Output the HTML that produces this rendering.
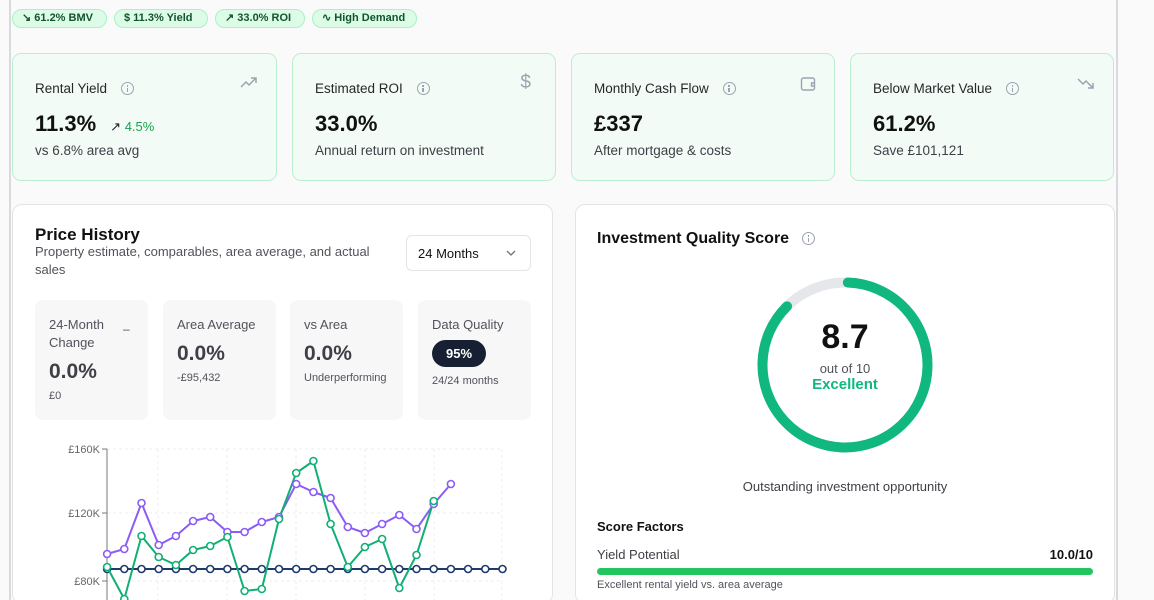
<!DOCTYPE html>
<html><head><meta charset="utf-8"><style>
*{box-sizing:border-box;margin:0;padding:0}
html{overflow:hidden;height:600px}
body{width:1154px;height:600px;overflow:hidden;background:#fafafa;font-family:"Liberation Sans",sans-serif;color:#18181b;position:relative}
.vl{position:absolute;top:0;width:2px;height:600px;background:#d9d9de}
.badge{position:absolute;top:9px;height:19px;border:1px solid #a7f3c5;background:#dcfce7;border-radius:10px;color:#14532d;font-size:11px;font-weight:bold;line-height:17px;padding:0 9px;white-space:nowrap}
.card{position:absolute;top:53px;height:128px;border:1px solid #bbf0cf;border-radius:9px;background:#f3fbf6}
.card .t{position:absolute;left:22px;top:27px;font-size:13.5px;color:#27272a}
.card .v{position:absolute;left:22px;top:57px;font-size:22px;font-weight:bold;color:#111}
.card .s{position:absolute;left:22px;top:89px;font-size:13.5px;color:#3f3f46}
.info{display:inline-block;width:13px;height:13px;border:1.3px solid #9ca3af;border-radius:50%;vertical-align:-2px;margin-left:14px;position:relative}
.info:after{content:"";position:absolute;left:4.5px;top:4.5px;width:1.5px;height:4px;background:#9ca3af}
.info:before{content:"";position:absolute;left:4.5px;top:2px;width:1.5px;height:1.5px;background:#9ca3af}
.ic{position:absolute;right:18px;top:22px}
.panel{position:absolute;top:204px;height:400px;border:1px solid #e4e4e7;border-radius:10px;background:#fff}
.st{position:absolute;top:95px;width:113px;height:120px;background:#f7f7f8;border-radius:8px}
.st .a{position:absolute;left:14px;top:16px;font-size:13px;color:#52525b;line-height:18px}
.st .b{position:absolute;left:14px;font-size:21px;font-weight:bold;color:#3f3f46}
.st .c{position:absolute;left:14px;font-size:11px;color:#52525b}
</style></head><body>
<div class="vl" style="left:9px"></div>
<div class="vl" style="left:1116px"></div>

<div class="badge" style="left:12px;width:95px">↘ 61.2% BMV</div>
<div class="badge" style="left:114px;width:94px">$ 11.3% Yield</div>
<div class="badge" style="left:215px;width:90px">↗ 33.0% ROI</div>
<div class="badge" style="left:312px;width:105px">∿ High Demand</div>

<div class="card" style="left:12px;width:265px">
<div class="t">Rental Yield<span class="info"></span></div>
<svg class="ic" width="18" height="14" viewBox="0 0 18 14" fill="none" stroke="#9ca3af" stroke-width="1.5"><path d="M1 11l5-5 3 3 7-7M11 2h5v5"/></svg>
<div class="v">11.3%<span style="font-size:13px;color:#16a34a;font-weight:normal;margin-left:14px"><span style="color:#222">↗</span> 4.5%</span></div>
<div class="s">vs 6.8% area avg</div></div>
<div class="card" style="left:292px;width:264px">
<div class="t">Estimated ROI<span class="info"></span></div>
<div class="ic" style="font-size:19px;color:#9ca3af;top:18px;right:24px">$</div>
<div class="v">33.0%</div>
<div class="s">Annual return on investment</div></div>
<div class="card" style="left:571px;width:264px">
<div class="t">Monthly Cash Flow<span class="info"></span></div>
<svg class="ic" width="16" height="16" viewBox="0 0 16 16" fill="none" stroke="#9ca3af" stroke-width="1.4"><rect x="1.5" y="2" width="13" height="12" rx="2"/><path d="M14.5 7h-3v3h3"/></svg>
<div class="v">£337</div>
<div class="s">After mortgage &amp; costs</div></div>
<div class="card" style="left:850px;width:264px">
<div class="t">Below Market Value<span class="info"></span></div>
<svg class="ic" width="18" height="14" viewBox="0 0 18 14" fill="none" stroke="#9ca3af" stroke-width="1.5"><path d="M1 3l5 5 3-3 7 7M11 12h5V7"/></svg>
<div class="v">61.2%</div>
<div class="s">Save £101,121</div></div>

<div class="panel" style="left:12px;width:541px">
<div style="position:absolute;left:22px;top:20px;font-size:17px;font-weight:bold;color:#111">Price History</div>
<div style="position:absolute;left:22px;top:38px;width:360px;font-size:13px;line-height:18px;color:#52525b">Property estimate, comparables, area average, and actual sales</div>
<div style="position:absolute;left:393px;top:30px;width:125px;height:36px;border:1px solid #e4e4e7;border-radius:6px;font-size:13px;padding:10px 11px;color:#111">24 Months<svg style="position:absolute;right:14px;top:14px" width="10" height="6" viewBox="0 0 10 6" fill="none" stroke="#71717a" stroke-width="1.3"><path d="M1 1l4 4 4-4"/></svg></div>
<div class="st" style="left:22px"><div class="a">24-Month<br>Change</div><div style="position:absolute;left:88px;top:22px;color:#52525b;font-size:12px">–</div><div class="b" style="top:60px">0.0%</div><div class="c" style="top:90px">£0</div></div>
<div class="st" style="left:150px"><div class="a">Area Average</div><div class="b" style="top:42px">0.0%</div><div class="c" style="top:72px">-£95,432</div></div>
<div class="st" style="left:277px"><div class="a">vs Area</div><div class="b" style="top:42px">0.0%</div><div class="c" style="top:72px">Underperforming</div></div>
<div class="st" style="left:405px"><div class="a">Data Quality</div><div style="position:absolute;left:14px;top:40px;width:54px;height:27px;border-radius:14px;background:#172033;color:#fff;font-weight:bold;font-size:13px;text-align:center;line-height:27px">95%</div><div class="c" style="top:75px">24/24 months</div></div>
</div>

<svg style="position:absolute;left:0;top:0" width="560" height="600">
<g stroke="#ececec" stroke-dasharray="3 3" fill="none"><path d="M107 449H503M107 513H503M107 581H503M158 449V600M227 449V600M296 449V600M365 449V600M434 449V600M502 449V600"/></g>
<path d="M107 449V600M102 449H107M102 513H107M102 581H107" stroke="#777" stroke-width="1"/>
<g font-size="11" fill="#666" text-anchor="end"><text x="100" y="453">£160K</text><text x="100" y="517">£120K</text><text x="100" y="585">£80K</text></g>
<path d="M107 569H502.5" stroke="#1e3a6e" stroke-width="2"/>
<g fill="#fff" stroke="#1e3a6e" stroke-width="1.6"><circle cx="107.1" cy="569" r="3.5"/><circle cx="124.3" cy="569" r="3.5"/><circle cx="141.5" cy="569" r="3.5"/><circle cx="158.7" cy="569" r="3.5"/><circle cx="175.9" cy="569" r="3.5"/><circle cx="193.1" cy="569" r="3.5"/><circle cx="210.2" cy="569" r="3.5"/><circle cx="227.4" cy="569" r="3.5"/><circle cx="244.6" cy="569" r="3.5"/><circle cx="261.8" cy="569" r="3.5"/><circle cx="279" cy="569" r="3.5"/><circle cx="296.2" cy="569" r="3.5"/><circle cx="313.4" cy="569" r="3.5"/><circle cx="330.6" cy="569" r="3.5"/><circle cx="347.8" cy="569" r="3.5"/><circle cx="364.9" cy="569" r="3.5"/><circle cx="382.1" cy="569" r="3.5"/><circle cx="399.3" cy="569" r="3.5"/><circle cx="416.5" cy="569" r="3.5"/><circle cx="433.7" cy="569" r="3.5"/><circle cx="450.9" cy="569" r="3.5"/><circle cx="468.1" cy="569" r="3.5"/><circle cx="485.3" cy="569" r="3.5"/><circle cx="502.5" cy="569" r="3.5"/></g>
<polyline fill="none" stroke="#8b5cf6" stroke-width="2" stroke-linejoin="round" points="107.1,554 124.3,549 141.5,503 158.7,545 175.9,536 193.1,521 210.2,517 227.4,532 244.6,532 261.8,522 279,517 296.2,484 313.4,492 330.6,498 347.8,527 364.9,533 382.1,524 399.3,515 416.5,529 433.7,504 450.9,484"/>
<polyline fill="none" stroke="#10b074" stroke-width="2" stroke-linejoin="round" points="107.1,567 124.3,599 141.5,536 158.7,557 175.9,565 193.1,550 210.2,546 227.4,537 244.6,591 261.8,589 279,519 296.2,473 313.4,461 330.6,524 347.8,567 364.9,547 382.1,539 399.3,588 416.5,555 433.7,501"/>
<g fill="#fff" stroke="#8b5cf6" stroke-width="1.6"><circle cx="107.1" cy="554" r="3.5"/><circle cx="124.3" cy="549" r="3.5"/><circle cx="141.5" cy="503" r="3.5"/><circle cx="158.7" cy="545" r="3.5"/><circle cx="175.9" cy="536" r="3.5"/><circle cx="193.1" cy="521" r="3.5"/><circle cx="210.2" cy="517" r="3.5"/><circle cx="227.4" cy="532" r="3.5"/><circle cx="244.6" cy="532" r="3.5"/><circle cx="261.8" cy="522" r="3.5"/><circle cx="279" cy="517" r="3.5"/><circle cx="296.2" cy="484" r="3.5"/><circle cx="313.4" cy="492" r="3.5"/><circle cx="330.6" cy="498" r="3.5"/><circle cx="347.8" cy="527" r="3.5"/><circle cx="364.9" cy="533" r="3.5"/><circle cx="382.1" cy="524" r="3.5"/><circle cx="399.3" cy="515" r="3.5"/><circle cx="416.5" cy="529" r="3.5"/><circle cx="433.7" cy="504" r="3.5"/><circle cx="450.9" cy="484" r="3.5"/></g>
<g fill="#fff" stroke="#10b074" stroke-width="1.6"><circle cx="107.1" cy="567" r="3.5"/><circle cx="124.3" cy="599" r="3.5"/><circle cx="141.5" cy="536" r="3.5"/><circle cx="158.7" cy="557" r="3.5"/><circle cx="175.9" cy="565" r="3.5"/><circle cx="193.1" cy="550" r="3.5"/><circle cx="210.2" cy="546" r="3.5"/><circle cx="227.4" cy="537" r="3.5"/><circle cx="244.6" cy="591" r="3.5"/><circle cx="261.8" cy="589" r="3.5"/><circle cx="279" cy="519" r="3.5"/><circle cx="296.2" cy="473" r="3.5"/><circle cx="313.4" cy="461" r="3.5"/><circle cx="330.6" cy="524" r="3.5"/><circle cx="347.8" cy="567" r="3.5"/><circle cx="364.9" cy="547" r="3.5"/><circle cx="382.1" cy="539" r="3.5"/><circle cx="399.3" cy="588" r="3.5"/><circle cx="416.5" cy="555" r="3.5"/><circle cx="433.7" cy="501" r="3.5"/></g>
</svg>

<div class="panel" style="left:575px;width:540px">
<div style="position:absolute;left:21px;top:25px;font-size:16px;font-weight:bold;color:#111">Investment Quality Score<span class="info" style="margin-left:13px"></span></div>
<svg style="position:absolute;left:176px;top:67px" width="186" height="186" viewBox="0 0 186 186">
<circle cx="93" cy="93" r="82.5" fill="none" stroke="#e5e7eb" stroke-width="10"/>
<circle cx="93" cy="93" r="82.5" fill="none" stroke="#10b77f" stroke-width="10" stroke-linecap="round" stroke-dasharray="451 600" transform="rotate(-88 93 93)"/>
</svg>
<div style="position:absolute;left:0;width:538px;text-align:center;top:113px;font-size:34px;font-weight:bold;color:#111">8.7</div>
<div style="position:absolute;left:0;width:538px;text-align:center;top:156px;font-size:13px;color:#52525b">out of 10</div>
<div style="position:absolute;left:0;width:538px;text-align:center;top:171px;font-size:15px;font-weight:bold;color:#10b77f">Excellent</div>
<div style="position:absolute;left:0;width:538px;text-align:center;top:274px;font-size:13px;color:#3f3f46">Outstanding investment opportunity</div>
<div style="position:absolute;left:21px;top:314px;font-size:13px;font-weight:bold;color:#111">Score Factors</div>
<div style="position:absolute;left:21px;top:342px;font-size:13px;color:#3f3f46">Yield Potential</div>
<div style="position:absolute;right:21px;top:342px;font-size:13px;font-weight:bold;color:#111">10.0/10</div>
<div style="position:absolute;left:21px;top:363px;width:496px;height:7px;border-radius:4px;background:#22c55e"></div>
<div style="position:absolute;left:21px;top:374px;font-size:11px;color:#52525b">Excellent rental yield vs. area average</div>
</div>
</body></html>
